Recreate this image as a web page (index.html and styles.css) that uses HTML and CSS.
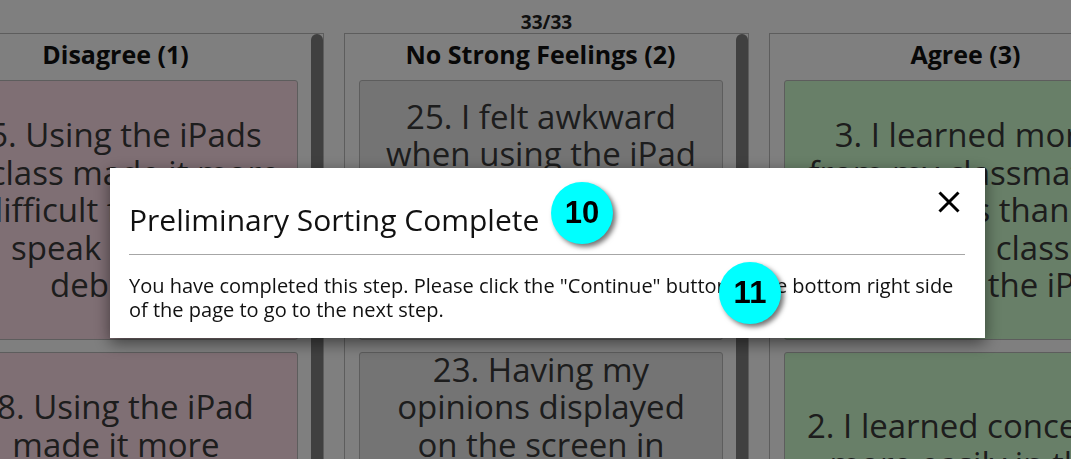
FILE: index.html
```html
<!DOCTYPE html>
<html lang="en">
<head>
<meta charset="utf-8">
<title>Sorting</title>
<link rel="stylesheet" href="styles.css">
</head>
<body>
<div class="app">
  <div class="counter">33/33</div>
  <div class="board">
    <section class="column">
      <div class="col-main">
        <h2 class="col-title">Disagree (1)</h2>
        <div class="cards">
          <div class="card card-disagree">15. Using the iPads in class made it more difficult for me to speak in class debates.</div>
          <div class="card card-disagree">18. Using the iPad made it more uncomfortable to share my ideas with the class.</div>
        </div>
      </div>
      <div class="scrollbar"><div class="thumb"></div></div>
    </section>
    <section class="column">
      <div class="col-main">
        <h2 class="col-title">No Strong Feelings (2)</h2>
        <div class="cards">
          <div class="card card-neutral">25. I felt awkward when using the iPad because I did not want my classmates to see my answers on the screen.</div>
          <div class="card card-neutral">23. Having my opinions displayed on the screen in front of the class made me feel uncomfortable sharing my ideas.</div>
        </div>
      </div>
      <div class="scrollbar"><div class="thumb"></div></div>
    </section>
    <section class="column">
      <div class="col-main">
        <h2 class="col-title">Agree (3)</h2>
        <div class="cards">
          <div class="card card-agree">3. I learned more from my classmates' answers than traditional classes that lacked the iPad.</div>
          <div class="card card-agree">2. I learned concepts more easily in the iPad class than in a traditional class.</div>
        </div>
      </div>
      <div class="scrollbar"><div class="thumb"></div></div>
    </section>
  </div>
</div>

<div class="backdrop"></div>

<div class="modal" role="dialog" aria-labelledby="modal-title">
  <div class="modal-header">
    <h3 class="modal-title" id="modal-title">Preliminary Sorting Complete</h3>
    <button class="close" type="button" aria-label="Close">
      <svg width="22" height="22" viewBox="0 0 22 22" aria-hidden="true"><path d="M1.5 1.5 L20.5 20.5 M20.5 1.5 L1.5 20.5" stroke="#000" stroke-width="3" fill="none"/></svg>
    </button>
  </div>
  <div class="modal-body">You have completed this step. Please click the "Continue" button in the bottom right side of the page to go to the next step.</div>
</div>

<div class="badge badge-10">10</div>
<div class="badge badge-11">11</div>
</body>
</html>
```

FILE: styles.css
```css
html, body {
  margin: 0;
  padding: 0;
  overflow: hidden;
  height: 100%;
}
body {
  background: #ffffff;
  font-family: "Open Sans", "Liberation Sans", sans-serif;
  color: #333333;
}
.app {
  width: 1255px;
  margin-left: -81px;
  padding-top: 11px;
}
.counter {
  text-align: center;
  font-weight: 700;
  font-size: 19px;
  line-height: 22px;
  color: #222;
}
.board {
  display: flex;
  gap: 20px;
}
.column {
  width: 405px;
  box-sizing: border-box;
  height: 640px;
  border: 1px solid #bbbbbb;
  display: flex;
  overflow: hidden;
}
.col-main {
  flex: 1;
  min-width: 0;
}
.scrollbar {
  width: 12px;
  flex: none;
}
.thumb {
  height: 560px;
  background: #808080;
  border-radius: 6px;
}
.col-title {
  margin: 0 0 6px;
  text-align: center;
  font-size: 25px;
  font-weight: 700;
  line-height: 40px;
  color: #111;
}
.cards {
  display: flex;
  flex-direction: column;
  gap: 12px;
  padding: 0 13px 12px 14px;
}
.card {
  height: 260px;
  box-sizing: border-box;
  border: 1px solid #bbbbbb;
  border-radius: 3px;
  display: flex;
  align-items: center;
  justify-content: center;
  text-align: center;
  padding: 0 17px;
  font-size: 33px;
  line-height: 37.5px;
  color: #3a3a3a;
}
.card-disagree { background: #ffdee9; }
.card-neutral { background: #e8e8e8; }
.card-agree { background: #d0ffd0; }

.backdrop {
  position: fixed;
  inset: 0;
  background: rgba(0, 0, 0, 0.5);
}
.modal {
  position: fixed;
  left: 110px;
  top: 168px;
  width: 875px;
  height: 170px;
  box-sizing: border-box;
  background: #fff;
  box-shadow: 0 5px 15px rgba(0, 0, 0, 0.5);
  padding: 0 20px 0 19px;
}
.modal-header {
  display: flex;
  align-items: flex-start;
  justify-content: space-between;
  height: 87px;
  box-sizing: border-box;
  border-bottom: 1px solid #a6a6a6;
}
.modal-title {
  margin: 31px 0 0;
  font-size: 30px;
  font-weight: 400;
  line-height: normal;
  color: #111;
}
.close {
  border: 0;
  background: none;
  padding: 0;
  margin: 23px 5px 0 0;
  width: 22px;
  height: 22px;
  display: flex;
  align-items: center;
  justify-content: center;
  cursor: pointer;
}
.modal-body {
  padding-top: 19px;
  font-size: 20px;
  line-height: 24px;
  color: #111;
}
.badge {
  position: fixed;
  width: 62px;
  height: 62px;
  border-radius: 50%;
  background: #00ffff;
  box-shadow: 3px 3px 5px rgba(0, 0, 0, 0.55);
  display: flex;
  align-items: center;
  justify-content: center;
  font-family: "Liberation Sans", Arial, sans-serif;
  font-weight: 700;
  font-size: 31px;
  color: #000;
}
.badge-10 { left: 551px; top: 182px; }
.badge-11 { left: 719px; top: 262px; }
```
